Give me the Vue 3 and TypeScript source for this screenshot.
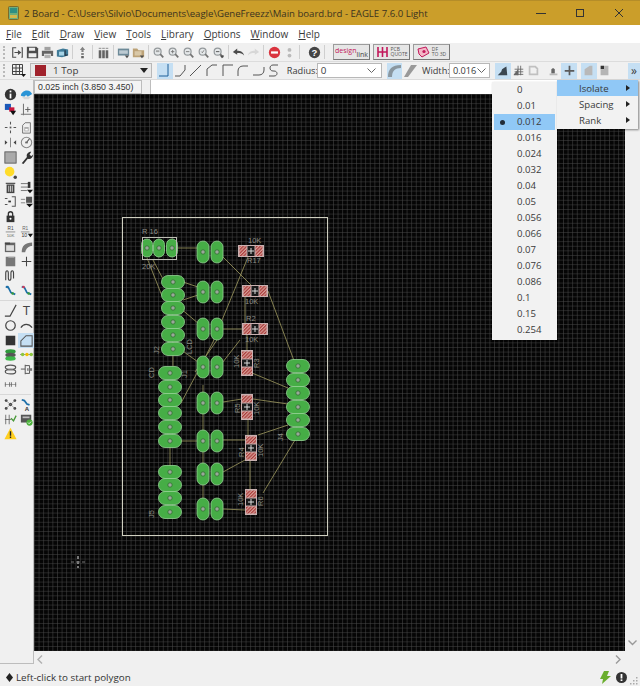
<script setup lang="ts">
// 画布坐标直接沿用整页像素坐标（viewBox 从 34,94 开始）
const d = '#3c3c3c'
const line = (p: string, c = d, w = 1.3) =>
  `<path d="${p}" fill="none" stroke="${c}" stroke-width="${w}"/>`
const fill = (p: string, c = d) => `<path d="${p}" fill="${c}"/>`
const lens = (extra = '') =>
  `<circle cx="6.5" cy="6.5" r="4" fill="#e4e8ea" stroke="#8a8f92" stroke-width="1.4"/>` +
  line('M9.5 9.5l3.5 3.5', '#666', 2) + extra

type Item = string | null

const topIcons: Item[] = [
  line('M6 2H2v11h4M12 2h1v11h-1') + fill('M4 7h4V4.5l4 3-4 3V8H4z'),
  fill('M1 1h11l2 2v11H1z') + fill('M3.5 2h7v3.5h-7zM3 8.5h9V13H3z', '#eee'),
  fill('M4 1h7v4H4z', '#999') + fill('M1 5.5h13v6h-2.5V9h-8v2.5H1z', '#555') + fill('M4 10h7v4H4z', '#aaa'),
  fill('M1 5l7-2 6 1v7l-7 2-6-1z', '#2d6f8f') + fill('M3.5 6.5h6v4.5h-6z', '#9fd0e6') + line('M10.5 5v6l3-1', '#123'),
  null,
  fill('M7.5 1l3 3.5H8.7V7H6.3V4.5H4.5z', '#777') + fill('M6 8.5h3V10H6zM6 11.5h3V14H6z', '#555'),
  null,
  fill('M2 5h3v9H2zM6 5h3v9H6zM10 5h3v9h-3z', '#555') + fill('M2 2h3v1.5H2zM6 2h3v1.5H6zM10 2h3v1.5h-3z', '#999'),
  null,
  fill('M1 3h13v8H1z', '#5f7f8f') + fill('M2.5 5h10v4h-10z', '#b7c6cf') + fill('M9 11h5l-2.5 3z'),
  fill('M1 3h5l1.5 2H14v8H1z', '#b79a6a') + fill('M3 6h8v5H3z', '#d7c4a0') + fill('M9 11h5l-2.5 3z'),
  null,
  lens(line('M4.5 6.5h4M4.5 5.5h4', '#777', 0.8)),
  lens(line('M4.5 6.5h4M6.5 4.5v4', '#666', 1)),
  lens(line('M4.5 6.5h4', '#666', 1)),
  lens(line('M5 6.5l1.2 1.2L8 5', '#666', 1)),
  lens(fill('M9 11h5l-2.5 3z') + line('M4.5 6.5h4', '#333', 1)),
  null,
  fill('M1 7l5-4v2.5c4 0 7 1.5 8 5.5-2-2.5-4-3-8-3V10z', '#3a3a3a'),
  fill('M14 7L9 3v2.5c-4 0-7 1.5-8 5.5 2-2.5 4-3 8-3V10z', '#d5d5d5'),
  null,
  `<circle cx="7.5" cy="7.5" r="6.5" fill="#d8202c"/><rect x="3.5" y="6.2" width="8" height="2.6" fill="#fff"/>`,
  `<circle cx="7.5" cy="4.5" r="2.2" fill="#b5b5b5"/><circle cx="7.5" cy="11" r="2.2" fill="#b5b5b5"/>`,
  null,
]

const help = `<circle cx="7.5" cy="7.5" r="6.5" fill="#333"/><text x="7.5" y="11.5" text-anchor="middle" font-size="11" font-weight="700" font-family="Liberation Sans" fill="#fff">?</text>`

const bends = [
  'M2 13h9V1',
  'M2 13h5l5-6V2',
  'M2 13L13 2',
  'M3 13V6l5-4h5',
  'M3 13V2h10',
  'M3 13V8c0-3 2-5 5-5h5',
  'M2 12h6c3 0 5-2 5-5V4',
  'M3 13h5c4 0 4-5 0-5H7C3 8 3 2 7 2h5',
]

const polyModes = [
  fill('M2 13L6 9l1-3 3-2 2-1 1 10z', '#3a4650'),
  line('M7 2v11M10 2v11M3 6h10M3 9h10M3 12h10', '#666', 1) + fill('M2 12l5-6v7H2z', '#666'),
  fill('M2 2h8l3 3v8H2z', '#c0c0c0') + fill('M4 4h5l2 2v5H4z', '#f0f0f0'),
  fill('M5 6l2-1.5 2 1.5v5H5z', '#666') + fill('M3 11h9v2H3z', '#bbb'),
  fill('M6.5 2h2v11h-2zM2 7h11v2H2z', '#5b5b5b'),
  fill('M3 13V6l6-4h3v11z', '#b8b8b8'),
  fill('M3 2h4v4H3z', '#333') + fill('M7 2h5v11H3V6h4z', '#b5b5b5'),
]

type SideRow = [string, string]
const wireGreen = (c2: string) =>
  line('M2 3l3 1 3 6 5 2', '#1d6fa8', 2) + `<circle cx="4" cy="3.5" r="1.5" fill="${c2}"/>` + `<circle cx="10" cy="11" r="1.5" fill="#3a9a3a"/>`

const sideGroups: SideRow[][] = [
  [
    [`<circle cx="7.5" cy="7.5" r="6.5" fill="#333"/><rect x="6.5" y="6.5" width="2" height="5.5" fill="#fff"/><rect x="6.5" y="3" width="2" height="2" fill="#fff"/>`,
      fill('M1 9c0-3 3-6 7-6 3 0 5 2 6 4l-5 3-2-2-2 2z', '#2a94d6') + fill('M2 10h11l-3 3H5z', '#d8d8d8')],
    [fill('M1 1h7v7H1z', '#1a58b8') + fill('M6 5h6v5H6z', '#c8163c') + fill('M7 9h7l-3.5 5z', '#111'),
      line('M4 1v13M1 13h12', '#777', 1.2) + line('M6 7.5h6M9 4.5v6', '#555', 1)],
  ],
  [
    [line('M7.5 1v3M7.5 11v3M1 7.5h3M11 7.5h3', '#555', 1.2) + fill('M6.5 6.5h2v2h-2z', '#555'),
      line('M3 5v9h9V2H6z', '#666', 1) + fill('M5 7h5v5H5z', '#aaa') + fill('M6 9h3v2H6z', '#fff')],
    [fill('M1 5l3 2.5L1 10zM14 5l-3 2.5 3 2.5z', '#444') + line('M7.5 2v11', '#777', 1),
      `<circle cx="7.5" cy="7.5" r="6" fill="none" stroke="#888" stroke-width="1.2"/>` + line('M7.5 7.5L11 3', '#555', 1.2) + fill('M6 6.5h3v2H6z', '#666')],
    [`<rect x="1" y="1" width="13" height="13" fill="#aaa" stroke="#555"/>`,
      fill('M2 14l6-7c-1-3 1-6 5-6l-2 3 2 2 2-2c0 4-3 6-6 5l-5 6z', '#333')],
    [`<circle cx="6.5" cy="6.5" r="5.5" fill="#ffdc2a"/><circle cx="13" cy="13" r="2" fill="#444"/>`, ''],
    [fill('M3 4h9v10H3z', '#444') + fill('M5 5.5h1v7H5zM7 5.5h1v7H7zM9 5.5h1v7H9z', '#ddd') + fill('M2 2h11v1.5H2z', '#555'),
      line('M1 3h9M1 7h9M1 11h7', '#666', 1) + fill('M9 1h3v7H9z', '#333') + fill('M8 10h7l-3.5 4z', '#111')],
    [line('M9 2h4v11H9M4 4H1M4 11H1', '#555', 1.2) + fill('M5 6.5h3v2H5z', '#333'),
      line('M1 5h5M1 9h5', '#777', 1) + fill('M7 2h7v7H7z', '#555') + fill('M7 10h8l-4 4z', '#111')],
    [`<rect x="3" y="6.5" width="9" height="7.5" fill="#333"/><path d="M5 7V4.5a2.5 2.5 0 015 0V7" fill="none" stroke="#333" stroke-width="1.5"/><circle cx="7.5" cy="10" r="1.2" fill="#fff"/>`, ''],
    [`<text x="7.5" y="6" text-anchor="middle" font-size="5.5" font-family="Liberation Sans" fill="#444">R1</text>` + line('M2 8h11', '#888', 1) + `<text x="7.5" y="14" text-anchor="middle" font-size="5" font-family="Liberation Sans" fill="#666">10K</text>`,
      `<text x="6" y="6" text-anchor="middle" font-size="5.5" font-family="Liberation Sans" fill="#666">R1</text>` + line('M1 8h10', '#888', 1) + `<text x="5" y="14" text-anchor="middle" font-size="6" font-family="Liberation Sans" fill="#333">10</text>` + fill('M9 10h6l-3 4z', '#111')],
    [fill('M1 3h12v11H1z', '#666') + fill('M2.5 6h9v6.5h-9z', '#ddd') + fill('M1 3h6v2H1z', '#444'),
      fill('M2 14c0-7 4-11 12-11v4c-4 0-7 3-8 7z', '#777')],
    [fill('M2 2h11v11H2z', '#777') + fill('M5 2h7v1H5z', '#bbb'), line('M7.5 2v11M2 7.5h11', '#444', 1.2)],
    [line('M2 13V5c0-4 3-4 3 0v5c0 4 3 4 3 0V5c0-4 3-4 3 0v6', '#444', 1.3), ''],
    [wireGreen('#1d6fa8'), wireGreen('#d23a5a')],
  ],
  [
    [line('M1 14h6l7-13', '#444', 1.3), `<text x="7.5" y="13" text-anchor="middle" font-size="14" font-family="Liberation Sans" fill="#444">T</text>`],
    [`<circle cx="7.5" cy="7.5" r="5.5" fill="none" stroke="#444" stroke-width="1.4"/>`, line('M1 10c3-5 9-5 13 0', '#444', 1.4)],
    [`<rect x="2" y="2" width="11" height="11" fill="#333"/>`, line('M1 14V8l6-6h7v12z', '#555', 1.2)],
    [`<ellipse cx="7.5" cy="4" rx="6" ry="2.6" fill="#2f9a3c"/><ellipse cx="7.5" cy="8" rx="6" ry="2.6" fill="#555"/><ellipse cx="7.5" cy="12" rx="6" ry="2.6" fill="#3db84a"/>`,
      line('M0 7.5h15', '#888', 1) + `<circle cx="3" cy="7.5" r="2" fill="#8cc63f"/><circle cx="8" cy="7.5" r="2" fill="#f0c000"/><circle cx="13" cy="7.5" r="2" fill="#8cc63f"/>`],
    [`<ellipse cx="7.5" cy="5" rx="6" ry="2.6" fill="none" stroke="#555" stroke-width="1.4"/><ellipse cx="7.5" cy="10" rx="6" ry="2.6" fill="none" stroke="#555" stroke-width="1.4"/><ellipse cx="7.5" cy="7.5" rx="3" ry="1" fill="#777"/>`,
      line('M1 7h5M6 2v11M6 3h5v9H6M9 6v3', '#555', 1.1) + fill('M10 6h4v3h-4z', '#777')],
    [line('M1 7.5h13', '#999', 1) + fill('M1 5h1v5H1zM6 5h1v5H6zM8 5h1v5H8zM13 5h1v5h-1z', '#666'), ''],
  ],
  [
    [`<circle cx="7.5" cy="7.5" r="2" fill="#444"/><circle cx="2.5" cy="3" r="1.6" fill="#444"/><circle cx="12.5" cy="3" r="1.6" fill="#444"/><circle cx="2.5" cy="12" r="1.6" fill="#444"/><circle cx="12.5" cy="12" r="1.6" fill="#444"/>` + line('M2.5 3l10 9M12.5 3l-10 9', '#777', 0.7),
      line('M2 2l3 1 3 4 3 1', '#1d6fa8', 2) + `<text x="8" y="14.5" text-anchor="middle" font-size="7" font-family="Liberation Sans" font-weight="700" fill="#333">A</text>`],
    [line('M2 2v11M6 2v11M1 7.5h7', '#666', 1) + line('M8 6l3 3 3-6', '#4a9a3a', 1.5),
      fill('M1 2h12v9H1z', '#555') + fill('M3 4h8v2H3z', '#bbb') + `<circle cx="11" cy="11" r="3.6" fill="#4bb03a"/>` + line('M9.2 11l1.3 1.3 2.3-2.4', '#fff', 1)],
    [fill('M7.5 1L14.5 14H.5z', '#ffcf1f') + fill('M6.7 5h1.6v5H6.7zM6.7 11h1.6v1.6H6.7z', '#222'), ''],
  ],
]

const widths = ['0', '0.01', '0.012', '0.016', '0.024', '0.032', '0.04', '0.05', '0.056', '0.066', '0.07', '0.076', '0.086', '0.1', '0.15', '0.254']
const subItems = ['Isolate', 'Spacing', 'Rank']
const menus = ['File', 'Edit', 'Draw', 'View', 'Tools', 'Library', 'Options', 'Window', 'Help']

// 焊盘 / 贴片 / 飞线
const hPads: number[][] = [
  [173, 282], [173, 295], [173, 308], [173, 322], [173, 335], [173, 349],
  [170, 373], [170, 387], [170, 400], [170, 413], [170, 427], [170, 441],
  [170, 472], [170, 485], [170, 498], [170, 512],
  [298, 366], [298, 380], [298, 393], [298, 407], [298, 420], [298, 434],
]
const pairRows = [252, 292, 329, 367, 403, 441, 474, 509]
const vPads: number[][] = pairRows.flatMap((y) => [[203, y], [217, y]])
const headerPads = [147, 159, 172]
const smdH = [[251, 251], [255, 291], [255, 329]]
const smdV = [[247, 363], [247, 407], [251, 448], [251, 502]]

const wires: number[][] = [
  [176, 248, 203, 248], [223, 257, 253, 287], [248, 257, 213, 342], [213, 342, 197, 373], [197, 373, 181, 403],
  [153, 260, 163, 279], [147, 258, 162, 296], [183, 282, 198, 287], [183, 300, 198, 295], [180, 308, 205, 329],
  [217, 329, 242, 329], [245, 297, 245, 323], [247, 335, 247, 350], [268, 291, 296, 366], [180, 349, 205, 367],
  [252, 373, 288, 388], [223, 402, 242, 399], [253, 399, 288, 404], [258, 435, 288, 425], [222, 440, 245, 440],
  [178, 441, 198, 441], [223, 472, 245, 460], [223, 509, 245, 510], [263, 493, 295, 440], [170, 447, 170, 467],
  [203, 385, 203, 498], [248, 420, 248, 435], [250, 461, 250, 489], [217, 340, 195, 372], [170, 290, 170, 276],
  [173, 342, 173, 366], [219, 367, 240, 340],
]

type Label = { t: string; x: number; y: number; r?: boolean }
const labels: Label[] = [
  { t: 'R 16', x: 142, y: 234 }, { t: '20K', x: 142, y: 269 }, { t: '10K', x: 248, y: 243 }, { t: 'R17', x: 247, y: 263 },
  { t: '10K', x: 245, y: 304 }, { t: 'R2', x: 246, y: 321 }, { t: '10K', x: 245, y: 342 },
  { t: 'J2', x: 159, y: 354, r: true }, { t: 'LCD', x: 192, y: 354, r: true }, { t: 'CD', x: 154, y: 378, r: true },
  { t: 'J1', x: 187, y: 378, r: true }, { t: '10K', x: 239, y: 368, r: true }, { t: 'R3', x: 259, y: 368, r: true },
  { t: '10K', x: 259, y: 415, r: true }, { t: 'R5', x: 240, y: 413, r: true }, { t: '10K', x: 263, y: 457, r: true },
  { t: 'R4', x: 244, y: 457, r: true }, { t: '10K', x: 243, y: 506, r: true }, { t: 'R6', x: 263, y: 506, r: true },
  { t: 'J4', x: 283, y: 441, r: true }, { t: 'J5', x: 154, y: 518, r: true },
]
</script>

<template>
  <div class="window">
    <header class="titlebar">
      <svg class="app-icon" width="11" height="14" viewBox="0 0 11 14">
        <rect x="0.5" y="0.5" width="10" height="13" rx="1" fill="#6fae7c" stroke="#7b6a2a" />
        <rect x="2" y="2" width="7" height="5" fill="#2f8f83" />
        <rect x="2" y="9" width="7" height="3" fill="#d7b84a" />
      </svg>
      <span class="title-text">2 Board - C:\Users\Silvio\Documents\eagle\GeneFreezz\Main board.brd - EAGLE 7.6.0 Light</span>
      <div class="win-btns">
        <svg width="10" height="10" viewBox="0 0 10 10"><path d="M0 5.5h10" stroke="#333" /></svg>
        <svg width="10" height="10" viewBox="0 0 10 10"><rect x="1.5" y="1.5" width="7" height="7" fill="none" stroke="#333" /></svg>
        <svg width="10" height="10" viewBox="0 0 10 10"><path d="M1 1l8 8M9 1L1 9" stroke="#333" /></svg>
      </div>
    </header>

    <nav class="menubar">
      <span v-for="m in menus" :key="m" class="menu-item"><u>{{ m[0] }}</u>{{ m.slice(1) }}</span>
    </nav>

    <div class="toolbar tb1">
      <span class="grip" />
      <template v-for="(ic, i) in topIcons" :key="i">
        <svg v-if="ic" class="tool" width="15" height="15" viewBox="0 0 15 15" v-html="ic" />
        <span v-else class="sep" />
      </template>
      <svg class="tool help" width="15" height="15" viewBox="0 0 15 15" v-html="help" />
      <span class="sep" />
      <div class="link-btn first"><span class="l1">design</span><span class="l2">link</span></div>
      <div class="link-btn">
        <svg width="13" height="12" viewBox="0 0 13 12"><path d="M2 1v10M6.5 1v10M11 1v10M2 6h9" stroke="#c2185b" stroke-width="1.6" fill="none" /></svg>
        <span class="l3">PCB<br />QUOTE</span>
      </div>
      <div class="link-btn">
        <svg width="13" height="12" viewBox="0 0 13 12"><path d="M1 3l8-2 3 6-7 4-3-3z" fill="#f4b6c6" stroke="#c2185b" /><circle cx="7" cy="5.5" r="1.6" fill="#c2185b" /></svg>
        <span class="l3">DF<br />TO 3D</span>
      </div>
    </div>

    <div class="toolbar tb2">
      <span class="grip" />
      <svg class="grid-btn" width="16" height="15" viewBox="0 0 16 15">
        <path d="M1.5 1.5h10v10h-10zM1.5 5h10M1.5 8.5h10M5 1.5v10M8.5 1.5v10" fill="none" stroke="#444" />
        <path d="M10 11h5l-2.5 3z" fill="#111" />
      </svg>
      <div class="combo layer">
        <i class="swatch" /><span class="layer-name">1 Top</span>
        <svg width="8" height="5" viewBox="0 0 8 5"><path d="M0 0h8L4 5z" fill="#222" /></svg>
      </div>
      <div class="bends">
        <span v-for="(b, i) in bends" :key="i" class="bend" :class="{ on: i === 0 }">
          <svg width="15" height="15" viewBox="0 0 15 15"><path :d="b" fill="none" :stroke="i === 0 ? '#1c5f99' : '#555'" stroke-width="1" /></svg>
        </span>
      </div>
      <span class="lbl radius-lbl">Radius:</span>
      <div class="combo radius">
        <span>0</span>
        <svg width="9" height="5" viewBox="0 0 9 5"><path d="M.5.5l4 4 4-4" fill="none" stroke="#666" /></svg>
      </div>
      <span class="bend on miter">
        <svg width="15" height="15" viewBox="0 0 15 15"><path d="M1 14c0-8 4-12 13-12v3C8 5 5 8 5 14z" fill="#8a97a0" /></svg>
      </span>
      <span class="bend">
        <svg width="15" height="15" viewBox="0 0 15 15"><path d="M1 14L8 2h6L5 14z" fill="#999" /></svg>
      </span>
      <span class="lbl width-lbl">Width:</span>
      <div class="combo width">
        <span>0.016</span>
        <svg width="9" height="5" viewBox="0 0 9 5"><path d="M.5.5l4 4 4-4" fill="none" stroke="#666" /></svg>
      </div>
      <div class="modes">
        <span
          v-for="(p, i) in polyModes"
          :key="i"
          class="bend mode"
          :class="{ on: i === 0 || i === 4 || i === 5, 'gap-l': i === 3 || i === 5 }"
        >
          <svg width="13" height="13" viewBox="0 0 15 15" v-html="p" />
        </span>
      </div>
      <span class="more">»</span>
    </div>

    <div class="main">
      <aside class="sidebar">
        <div v-for="(grp, g) in sideGroups" :key="g" class="side-group">
          <div v-for="(row, r) in grp" :key="r" class="side-row">
            <span v-for="(ic, c) in row" :key="c" class="side-btn" :class="{ on: g === 2 && r === 2 && c === 1 }">
              <svg v-if="ic" width="13" height="13" viewBox="0 0 15 15" v-html="ic" />
            </span>
          </div>
        </div>
      </aside>

      <div class="work">
        <div class="cmdrow">
          <span class="coords">0.025 inch (3.850 3.450)</span>
          <span class="cmd-btn" />
          <span class="cmd-input" />
        </div>
        <div class="canvas-row">
          <svg class="board" viewBox="34 94 591 557" preserveAspectRatio="none">
            <defs>
              <pattern id="fine" x="34" y="94" width="4.6" height="4.6" patternUnits="userSpaceOnUse">
                <path d="M0 0h4.6M0 0v4.6" stroke="#4a4a4a" stroke-width="1" fill="none" />
              </pattern>
              <pattern id="hatch" width="2.4" height="2.4" patternUnits="userSpaceOnUse" patternTransform="rotate(45)">
                <rect width="2.4" height="2.4" fill="#d8a098" />
                <rect width="1.2" height="2.4" fill="#a83a3a" />
              </pattern>
            </defs>
            <rect x="34" y="94" width="591" height="557" fill="#050505" />
            <rect x="34" y="94" width="591" height="557" fill="url(#fine)" />
            <rect x="122.5" y="217.5" width="205" height="318" fill="none" stroke="#cfcfc0" />

            <g stroke="#a09a60" stroke-width="0.8">
              <line v-for="(w, i) in wires" :key="i" :x1="w[0]" :y1="w[1]" :x2="w[2]" :y2="w[3]" />
            </g>

            <g v-for="(p, i) in hPads" :key="'h' + i">
              <rect :x="p[0] - 11.5" :y="p[1] - 6.5" width="23" height="13" rx="6.5" class="pad" />
              <circle :cx="p[0]" :cy="p[1]" r="2.2" class="drill" />
            </g>
            <g v-for="(p, i) in vPads" :key="'v' + i">
              <rect :x="p[0] - 6" :y="p[1] - 11" width="12" height="22" rx="6" class="pad" />
              <circle :cx="p[0]" :cy="p[1]" r="2.2" class="drill" />
            </g>
            <g v-for="x in headerPads" :key="'j' + x">
              <rect :x="x - 5.5" y="239" width="11" height="18" rx="5.5" class="pad" />
              <circle :cx="x" cy="248" r="2.2" class="drill" />
            </g>
            <rect x="142.5" y="237.5" width="34" height="22" fill="none" stroke="#bdbdb4" />

            <g v-for="(s, i) in smdH" :key="'sh' + i">
              <rect :x="s[0] - 13" :y="s[1] - 6" width="26" height="12" class="smd" />
              <rect :x="s[0] - 3.5" :y="s[1] - 5" width="7" height="10" fill="#1a1a1a" />
              <rect :x="s[0] - 11.5" :y="s[1] - 5" width="7" height="10" fill="url(#hatch)" />
              <rect :x="s[0] + 4.5" :y="s[1] - 5" width="7" height="10" fill="url(#hatch)" />
              <path :d="`M${s[0] - 3} ${s[1]}h6M${s[0]} ${s[1] - 3}v6`" stroke="#ddd" />
            </g>
            <g v-for="(s, i) in smdV" :key="'sv' + i">
              <rect :x="s[0] - 6" :y="s[1] - 13" width="12" height="26" class="smd" />
              <rect :x="s[0] - 5" :y="s[1] - 3.5" width="10" height="7" fill="#1a1a1a" />
              <rect :x="s[0] - 5" :y="s[1] - 11.5" width="10" height="7" fill="url(#hatch)" />
              <rect :x="s[0] - 5" :y="s[1] + 4.5" width="10" height="7" fill="url(#hatch)" />
              <path :d="`M${s[0] - 3} ${s[1]}h6M${s[0]} ${s[1] - 3}v6`" stroke="#ddd" />
            </g>

            <text
              v-for="l in labels"
              :key="l.t + l.x + l.y"
              class="silk"
              :x="l.x"
              :y="l.y"
              :transform="l.r ? `rotate(-90 ${l.x} ${l.y})` : undefined"
            >{{ l.t }}</text>

            <path d="M78 556v3M78 561v3M78 566v2" stroke="#e8e8e8" />
            <path d="M71 562h3M76 562h4M82 562h3" stroke="#777" />
          </svg>
          <div class="vscroll">
            <svg width="9" height="6" viewBox="0 0 9 6"><path d="M.5.5l4 4 4-4" fill="none" stroke="#9a9a9a" stroke-width="1.4" /></svg>
          </div>
        </div>
        <div class="hscroll">
          <svg width="6" height="9" viewBox="0 0 6 9"><path d="M5 .5l-4 4 4 4" fill="none" stroke="#b0b0b0" stroke-width="1.4" /></svg>
          <svg width="6" height="9" viewBox="0 0 6 9"><path d="M1 .5l4 4-4 4" fill="none" stroke="#9a9a9a" stroke-width="1.4" /></svg>
        </div>
      </div>
    </div>

    <footer class="statusbar">
      <svg width="7" height="9" viewBox="0 0 7 9"><path d="M3.5 0L7 4.5 3.5 9 0 4.5z" fill="#222" /></svg>
      <span class="status-text">Left-click to start polygon</span>
      <svg class="bolt" width="11" height="13" viewBox="0 0 11 13"><path d="M4 0l-4 8h3L2 13l9-8H7l2-5z" fill="#6aae2e" /></svg>
      <svg width="11" height="11" viewBox="0 0 11 11"><circle cx="5.5" cy="5.5" r="5.5" fill="#333" /><rect x="4.6" y="2" width="1.8" height="4.5" fill="#fff" /><rect x="4.6" y="7.4" width="1.8" height="1.6" fill="#fff" /></svg>
      <svg class="size-grip" width="9" height="9" viewBox="0 0 9 9"><path d="M7 1h1.5v1.5H7zM4 4h1.5v1.5H4zM7 4h1.5v1.5H7zM1 7h1.5v1.5H1zM4 7h1.5v1.5H4zM7 7h1.5v1.5H7z" fill="#aaa" /></svg>
    </footer>

    <div class="popup width-menu">
      <div v-for="w in widths" :key="w" class="pop-item" :class="{ active: w === '0.012' }">
        <i v-if="w === '0.012'" class="dot" />
        <span>{{ w }}</span>
      </div>
    </div>
    <div class="popup sub-menu">
      <div v-for="(s, i) in subItems" :key="s" class="sub-item" :class="{ active: i === 0 }">
        <span>{{ s }}</span>
        <svg width="4" height="6" viewBox="0 0 4 6"><path d="M0 0l4 3-4 3z" fill="#222" /></svg>
      </div>
    </div>
  </div>
</template>

<style>
html, body { margin: 0; padding: 0; background: #f0f0f0; }
</style>

<style scoped>
.window {
  position: relative;
  display: flex;
  flex-direction: column;
  width: 640px;
  height: 686px;
  overflow: hidden;
  background: #f0f0f0;
  color: #3a3a3a;
  font-family: "Open Sans", "Liberation Sans", sans-serif;
  font-size: 9.8px;
}
.titlebar {
  display: flex;
  align-items: center;
  flex: 0 0 25px;
  box-sizing: border-box;
  padding-left: 8px;
  background: #cb9e2a;
  border-top: 1px solid #b58d28;
  color: #3a3220;
  font-size: 9.6px;
}
.app-icon { margin-right: 5px; flex: none; }
.title-text { white-space: nowrap; }
.win-btns {
  display: flex;
  flex: none;
  gap: 29px;
  margin-left: auto;
  margin-right: 16px;
}
.menubar {
  display: flex;
  align-items: center;
  flex: 0 0 18px;
  padding-left: 6px;
  gap: 10px;
  background: #fff;
  font-size: 10px;
}
.menu-item u { text-underline-offset: 1px; }
.toolbar {
  display: flex;
  align-items: center;
  box-sizing: border-box;
  background: #f0f0f0;
}
.tb1 { flex: 0 0 18px; padding-left: 3px; }
.tb2 { flex: 0 0 19px; padding-left: 3px; border-top: 1px solid #dcdcdc; border-bottom: 1px solid #dcdcdc; }
.grip {
  flex: none;
  width: 2px;
  height: 13px;
  margin-right: 5px;
  border-left: 2px dotted #b9b9b9;
  box-sizing: border-box;
}
.tool { flex: none; padding: 1px; box-sizing: border-box; opacity: 0.9; }
.sep {
  align-self: center;
  flex: none;
  width: 5.25px;
  height: 14px;
  background: linear-gradient(#cfcfcf, #cfcfcf) center / 1px 100% no-repeat;
}
.help { margin-left: 5px; }
.link-btn {
  display: flex;
  align-items: center;
  justify-content: center;
  gap: 2px;
  flex: none;
  box-sizing: border-box;
  width: 37px;
  height: 16px;
  margin-left: 3px;
  background: #e6e6e6;
  border: 1px solid #9c9c9c;
  border-right-color: #777;
  border-bottom-color: #777;
  line-height: 1;
}
.link-btn.first { margin-left: 6px; }
.l1 { font-size: 7px; color: #c2185b; margin-top: -4px; }
.l2 { font-size: 7px; color: #444; margin-top: 4px; margin-left: -2px; }
.l3 { font-size: 5px; color: #555; }
.grid-btn { margin-left: 1px; margin-right: 3px; flex: none; }
.combo {
  display: flex;
  align-items: center;
  justify-content: space-between;
  box-sizing: border-box;
  height: 15px;
  background: #fff;
  flex: none;
}
.layer {
  width: 122px;
  padding: 0 3px 0 4px;
  background: #e9e9e9;
  border: 1px solid #b8b8b8;
}
.swatch { flex: none; width: 11px; height: 11px; background: #a0222c; }
.layer-name { flex: 1; margin-left: 7px; }
.bends { display: flex; margin-left: 5px; flex: none; }
.bend {
  display: flex;
  align-items: center;
  justify-content: center;
  flex: none;
  box-sizing: border-box;
  width: 15.6px;
  height: 16px;
}
.bend.on { background: #c5dff3; }
.lbl { flex: none; font-size: 9.2px; white-space: nowrap; }
.radius-lbl { margin-left: 5px; width: 30px; }
.radius { width: 65px; padding: 0 5px 0 3px; border: 1px solid #b8b8b8; }
.miter { margin-left: 5px; }
.width-lbl { margin-left: 4px; width: 27px; }
.width { width: 41px; padding: 0 3px 0 3px; border: 1px solid #b8b8b8; font-size: 9.2px; }
.modes { display: flex; margin-left: 5px; flex: none; }
.gap-l { margin-left: 4px; }
.more {
  flex: none;
  margin-left: auto;
  width: 12px;
  height: 16px;
  background: #c5dff3;
  text-align: center;
  line-height: 15px;
  font-size: 12px;
}
.main { display: flex; flex: 1; min-height: 0; }
.sidebar {
  display: flex;
  flex-direction: column;
  flex: 0 0 34px;
  box-sizing: border-box;
  padding-top: 7px;
  margin-bottom: 4px;
  border-right: 1px solid #bdbdbd;
  border-bottom: 1px solid #bdbdbd;
}
.side-group { padding: 0 0 2px 2px; margin-bottom: 2px; border-bottom: 1px solid #d8d8d8; width: 29px; }
.side-group:first-child { border-bottom: 0; margin-bottom: 1px; padding-bottom: 3px; }
.side-group:last-child { border-bottom: 0; }
.side-row { display: flex; height: 14.8px; }
.side-btn {
  display: flex;
  align-items: center;
  justify-content: center;
  width: 16px;
  height: 14.8px;
  flex: none;
}
.side-btn.on { background: #c5dff3; }
.work { display: flex; flex-direction: column; flex: 1; min-width: 0; }
.cmdrow { display: flex; flex: 0 0 14px; height: 14px; overflow: hidden; background: #f0f0f0; }
.coords {
  flex: none;
  box-sizing: border-box;
  width: 108px;
  height: 14px;
  padding-left: 3px;
  white-space: nowrap;
  line-height: 12px;
  font-family: "Liberation Sans", sans-serif;
  font-size: 8.8px;
  border: 1px solid #bdbdbd;
  background: #f4f4f4;
  color: #333;
}
.cmd-btn { flex: none; width: 9px; border-right: 1px solid #bdbdbd; box-sizing: border-box; }
.cmd-input { flex: 1; margin-right: 15px; background: #fff; }
.canvas-row { display: flex; flex: 1; min-height: 0; }
.board { flex: 1; min-width: 0; height: 100%; display: block; }
.vscroll {
  display: flex;
  align-items: flex-end;
  justify-content: center;
  flex: 0 0 15px;
  padding-bottom: 5px;
  box-sizing: border-box;
}
.hscroll {
  display: flex;
  align-items: center;
  justify-content: space-between;
  flex: 0 0 17px;
  padding: 0 19px 0 3px;
}
.statusbar {
  display: flex;
  align-items: center;
  flex: 0 0 18px;
  box-sizing: border-box;
  padding: 0 2px 0 6px;
  color: #333;
}
.status-text { margin-left: 3px; }
.bolt { margin-left: auto; margin-right: 5px; }
.size-grip { margin-left: 2px; align-self: flex-end; margin-bottom: 1px; }
.pad { fill: #46ad46; stroke: #93d393; stroke-width: 0.8; }
.drill { fill: #9aa89a; stroke: #2d6f2d; stroke-width: 0.8; }
.smd { fill: #c9b0b0; }
.silk { fill: #8e8e86; font-family: "Liberation Sans", sans-serif; font-size: 7.5px; }
.popup {
  position: absolute;
  box-sizing: border-box;
  background: #f2f2f2;
  box-shadow: 1px 1px 2px rgba(0, 0, 0, 0.45);
  font-size: 9.6px;
}
.width-menu { left: 492px; top: 82px; width: 65px; height: 258px; padding: 0 2px; }
.pop-item {
  position: relative;
  height: 16px;
  padding-left: 23px;
  line-height: 16px;
}
.pop-item.active { background: #90c8f6; }
.dot {
  position: absolute;
  left: 6px;
  top: 5.5px;
  width: 5px;
  height: 5px;
  border-radius: 50%;
  background: #222c38;
}
.sub-menu { left: 557px; top: 80px; width: 81px; height: 49px; padding-bottom: 1px; }
.sub-item {
  display: flex;
  align-items: center;
  justify-content: space-between;
  height: 16px;
  padding: 0 8px 0 22px;
}
.sub-item.active { background: #90c8f6; }
</style>
